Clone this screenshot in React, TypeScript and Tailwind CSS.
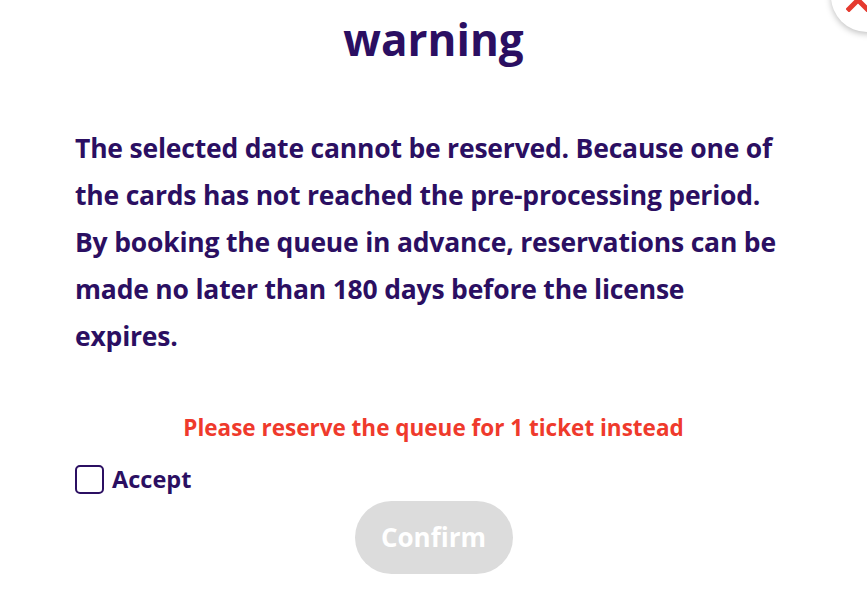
import React, { useState } from 'react';

const WarningModal = () => {
  const [accepted, setAccepted] = useState(false);

  return (
    <div className="relative w-[867px] h-[600px] overflow-hidden bg-white font-['Open_Sans',sans-serif] text-[#2b0f62]">
      {/* close button, half off the corner */}
      <button className="absolute -top-[40px] -right-[36px] w-[72px] h-[72px] rounded-full bg-white shadow-[0_2px_6px_rgba(0,0,0,0.25)]">
        <svg className="absolute left-[15px] bottom-[20px]" width="24" height="24" viewBox="0 0 24 24">
          <path d="M3 3 L21 21 M21 3 L3 21" stroke="#e53a2f" strokeWidth="5" strokeLinecap="square" />
        </svg>
      </button>

      <h1 className="text-center text-[44px] font-bold leading-none pt-[17px]">warning</h1>

      <p className="pl-[75px] pr-[30px] mt-[64px] text-[26.5px] font-bold leading-[47px] tracking-[-0.2px]">
        The selected date cannot be reserved. Because one of
        <br />
        the cards has not reached the pre-processing period.
        <br />
        By booking the queue in advance, reservations can be
        <br />
        made no later than 180 days before the license
        <br />
        expires.
      </p>

      <p className="mt-[51px] text-center text-[22.5px] font-bold text-[#ef3a2c]">
        Please reserve the queue for 1 ticket instead
      </p>

      <label className="flex items-center gap-[8px] ml-[75px] mt-[17px] cursor-pointer">
        <input
          type="checkbox"
          checked={accepted}
          onChange={(e) => setAccepted(e.target.checked)}
          className="appearance-none w-[29px] h-[29px] rounded-[5px] border-2 border-[#2b0f62] bg-white"
        />
        <span className="text-[23.5px] font-bold">Accept</span>
      </label>

      <div className="flex justify-center mt-[4px]">
        <button
          disabled={!accepted}
          className="w-[158px] h-[73px] rounded-full bg-[#dcdcdc] text-white text-[26px] font-bold"
        >
          Confirm
        </button>
      </div>
    </div>
  );
};

export default function App() {
  return <WarningModal />;
}
